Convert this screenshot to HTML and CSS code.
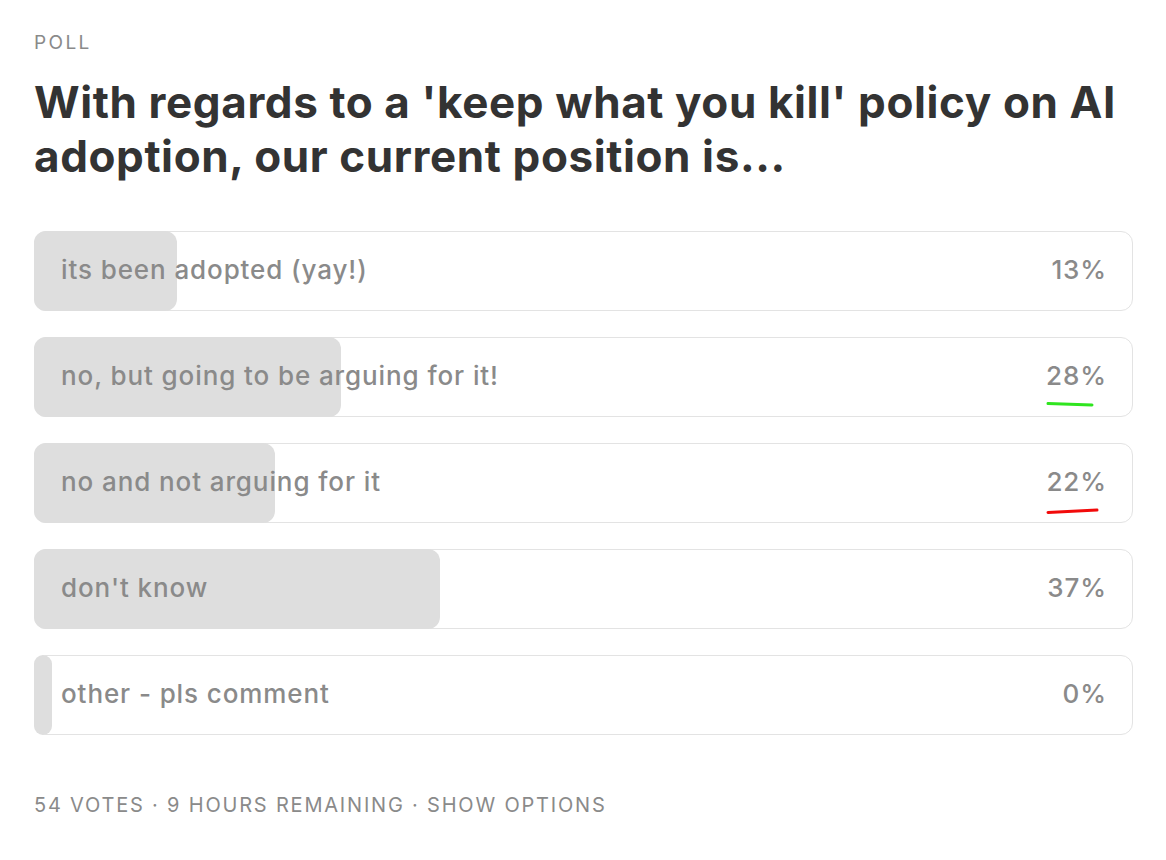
FILE: index.html
```html
<!DOCTYPE html>
<html>
<head>
<meta charset="utf-8">
<link rel="stylesheet" href="styles.css">
</head>
<body>
<div class="poll">
  <div class="label">POLL</div>
  <h1 class="title">With regards to a 'keep what you kill' policy on AI adoption, our current position is...</h1>
  <div class="options">
    <div class="option">
      <div class="fill" style="width:13%"></div>
      <span class="text">its been adopted (yay!)</span>
      <span class="pct">13%</span>
    </div>
    <div class="option">
      <div class="fill" style="width:28%"></div>
      <span class="text">no, but going to be arguing for it!</span>
      <span class="pct">28%</span>
      <svg class="mark" width="60" height="10" viewBox="0 0 60 10"><path d="M3 3.5 L47 5" stroke="#2fe51f" stroke-width="3" stroke-linecap="round" fill="none"/></svg>
    </div>
    <div class="option">
      <div class="fill" style="width:22%"></div>
      <span class="text">no and not arguing for it</span>
      <span class="pct">22%</span>
      <svg class="mark" width="60" height="10" viewBox="0 0 60 10"><path d="M3 6.5 L52 4" stroke="#f20a0a" stroke-width="3" stroke-linecap="round" fill="none"/></svg>
    </div>
    <div class="option">
      <div class="fill" style="width:37%"></div>
      <span class="text">don't know</span>
      <span class="pct">37%</span>
    </div>
    <div class="option">
      <div class="fill zero" style="width:0%"></div>
      <span class="text">other - pls comment</span>
      <span class="pct">0%</span>
    </div>
  </div>
  <div class="footer">54 VOTES · 9 HOURS REMAINING · SHOW OPTIONS</div>
</div>
</body>
</html>
```

FILE: styles.css
```css
html, body {
  margin: 0;
  padding: 0;
  background: #ffffff;
}
body {
  font-family: Inter, "Noto Sans", "Liberation Sans", sans-serif;
}
.poll {
  padding: 31px 33px 0 34px;
}
.label {
  font-size: 19px;
  line-height: 24px;
  letter-spacing: 2.4px;
  color: #8a8a8a;
  font-weight: 400;
}
.title {
  margin: 20px 0 0 0;
  font-size: 44px;
  line-height: 54px;
  font-weight: 700;
  color: #333333;
  letter-spacing: 0.6px;
}
.options {
  margin-top: 48px;
  display: flex;
  flex-direction: column;
  gap: 26px;
}
.option {
  position: relative;
  box-sizing: border-box;
  height: 80px;
  border: 1px solid #e3e3e3;
  border-radius: 12px;
  display: flex;
  align-items: center;
  justify-content: space-between;
  padding: 0 25px 3px 26px;
  font-size: 26px;
  font-weight: 500;
  letter-spacing: 0.9px;
  color: #8a8a8a;
}
.fill {
  position: absolute;
  left: -1px;
  top: -1px;
  bottom: -1px;
  background: #dedede;
  border-radius: 12px;
}
.fill.zero {
  min-width: 18px;
  border-radius: 9px;
}
.text, .pct {
  position: relative;
}
.mark {
  position: absolute;
  right: 27px;
  bottom: 6px;
}
.footer {
  margin-top: 58px;
  font-size: 20px;
  line-height: 24px;
  letter-spacing: 1.8px;
  color: #8a8a8a;
}
```
